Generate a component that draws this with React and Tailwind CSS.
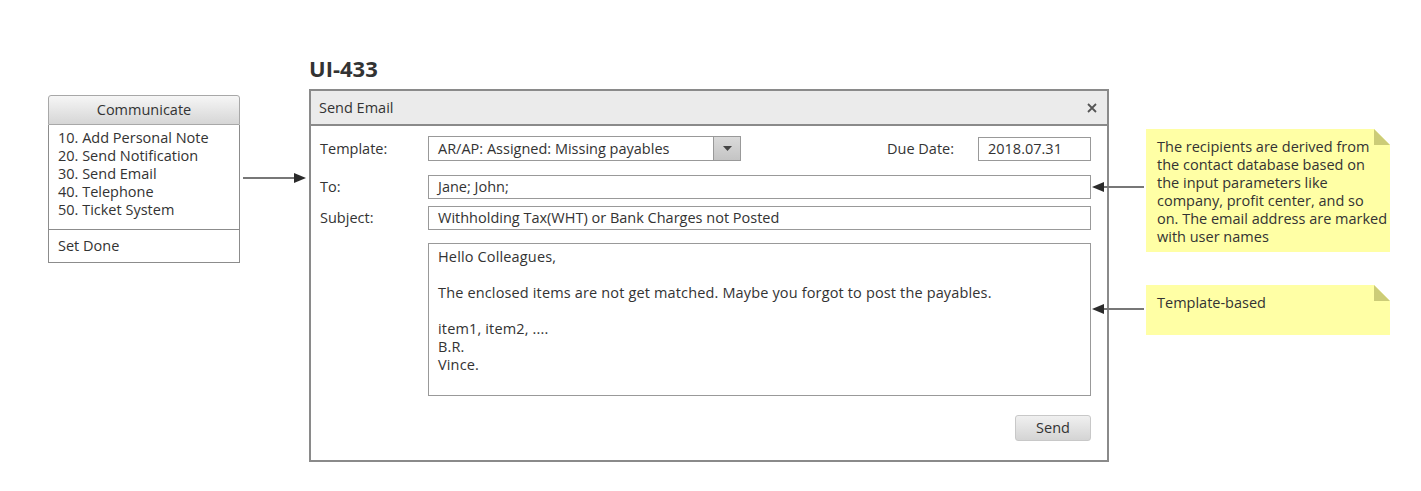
import React from 'react';

const fontStack = { fontFamily: '"Open Sans", "Noto Sans", sans-serif' };

const menuItems = [
  "10. Add Personal Note",
  "20. Send Notification",
  "30. Send Email",
  "40. Telephone",
  "50. Ticket System",
];

const bodyLines = [
  "Hello Colleagues,",
  "",
  "The enclosed items are not get matched. Maybe you forgot to post the payables.",
  "",
  "item1, item2, ....",
  "B.R.",
  "Vince.",
];

// folded corner on the sticky notes
const Fold = () => (
  <svg className="absolute right-0 top-0" width="16" height="16" viewBox="0 0 16 16">
    <polygon points="0,0 16,0 16,16" fill="#ffffff" />
    <polygon points="0,0 16,16 0,16" fill="#cccc77" />
  </svg>
);

const Note = ({ className, children }) => (
  <div className={`relative w-[244px] bg-[#ffffa5] pl-[11px] pr-[2px] pt-[9px] text-[14.5px] leading-[18px] text-[#333] ${className}`}>
    <Fold />
    {children}
  </div>
);

const Connectors = () => (
  <svg className="pointer-events-none absolute left-0 top-0" width="1421" height="491">
    <line x1="243" y1="178" x2="296" y2="178" stroke="#777" strokeWidth="2" />
    <polygon points="294,173 306,178 294,183" fill="#2b2b2b" />
    <line x1="1144" y1="187" x2="1102" y2="187" stroke="#777" strokeWidth="2" />
    <polygon points="1104,182 1092,187 1104,192" fill="#2b2b2b" />
    <line x1="1144" y1="309" x2="1102" y2="309" stroke="#777" strokeWidth="2" />
    <polygon points="1104,304 1092,309 1104,314" fill="#2b2b2b" />
  </svg>
);

export default function App() {
  return (
    <div className="relative flex h-[491px] w-[1421px] items-start overflow-hidden bg-white text-[#333]" style={fontStack}>
      {/* action menu */}
      <div className="ml-[48px] mt-[95px] w-[192px] text-[14.5px]">
        <div className="h-[30px] rounded-t-[3px] border border-[#a8a8a8] bg-gradient-to-b from-[#f6f6f6] to-[#d6d6d6] text-center leading-[28px]">
          Communicate
        </div>
        <div className="border border-t-0 border-[#8c8c8c]">
          <div className="px-[9px] pb-[10px] pt-[4px] leading-[18px]">
            {menuItems.map((item) => (
              <div key={item}>{item}</div>
            ))}
          </div>
          <div className="border-t border-[#8c8c8c] px-[9px] pb-[7px] pt-[7px] leading-[18px]">Set Done</div>
        </div>
      </div>

      {/* dialog */}
      <div className="ml-[69px] mt-[55px]">
        <div className="mb-[8px] h-[26px] text-[22px] font-bold leading-[26px] text-[#333]">UI-433</div>
        <div className="flex h-[373px] w-[800px] flex-col border-2 border-[#8a8a8a] text-[14.5px]">
          <div className="flex h-[35px] items-center justify-between border-b-2 border-[#8a8a8a] bg-[#ebebeb] pl-[8px] pr-[10px]">
            <span>Send Email</span>
            <svg width="10" height="10" viewBox="0 0 10 10">
              <path d="M1 1 L9 9 M9 1 L1 9" stroke="#555" strokeWidth="1.8" />
            </svg>
          </div>
          <div className="flex flex-col pl-[9px] pr-[16px]">
            <div className="mt-[10px] flex h-[25px] items-center">
              <span className="w-[108px]">Template:</span>
              <div className="flex h-[25px] w-[313px] items-stretch border border-[#999]">
                <span className="flex-1 px-[9px] leading-[23px]">AR/AP: Assigned: Missing payables</span>
                <div className="flex w-[27px] items-center justify-center border-l border-[#999] bg-gradient-to-b from-[#dadada] to-[#c4c4c4]">
                  <svg width="9" height="5" viewBox="0 0 9 5">
                    <polygon points="0,0 9,0 4.5,5" fill="#444" />
                  </svg>
                </div>
              </div>
              <span className="ml-[146px] w-[91px]">Due Date:</span>
              <div className="h-[24px] w-[113px] border border-[#999] px-[9px] leading-[22px]">2018.07.31</div>
            </div>
            <div className="mt-[14px] flex items-center">
              <span className="w-[108px]">To:</span>
              <div className="h-[24px] flex-1 border border-[#999] px-[9px] leading-[22px]">Jane; John;</div>
            </div>
            <div className="mt-[7px] flex items-center">
              <span className="w-[108px]">Subject:</span>
              <div className="h-[24px] flex-1 border border-[#999] px-[9px] leading-[22px]">
                Withholding Tax(WHT) or Bank Charges not Posted
              </div>
            </div>
            <div className="mt-[13px] flex">
              <span className="w-[108px]" />
              <div className="h-[153px] flex-1 border border-[#999] px-[9px] pt-[4px] leading-[18px] tracking-[0.15px]">
                {bodyLines.map((line, i) => (
                  <div key={i} className="h-[18px]">{line}</div>
                ))}
              </div>
            </div>
            <div className="mt-[19px] flex justify-end">
              <button className="h-[26px] w-[76px] rounded-[3px] border border-[#c8c8c8] bg-gradient-to-b from-[#f0f0f0] to-[#d4d4d4] text-[14.5px] text-[#333]">
                Send
              </button>
            </div>
          </div>
        </div>
      </div>

      {/* notes */}
      <div className="ml-[37px] mt-[129px] flex flex-col">
        <Note className="h-[123px]">
          The recipients are derived from the contact database based on the input parameters like company, profit center, and so on. The email address are marked with user names
        </Note>
        <Note className="mt-[33px] h-[50px]">Template-based</Note>
      </div>

      <Connectors />
    </div>
  );
}
